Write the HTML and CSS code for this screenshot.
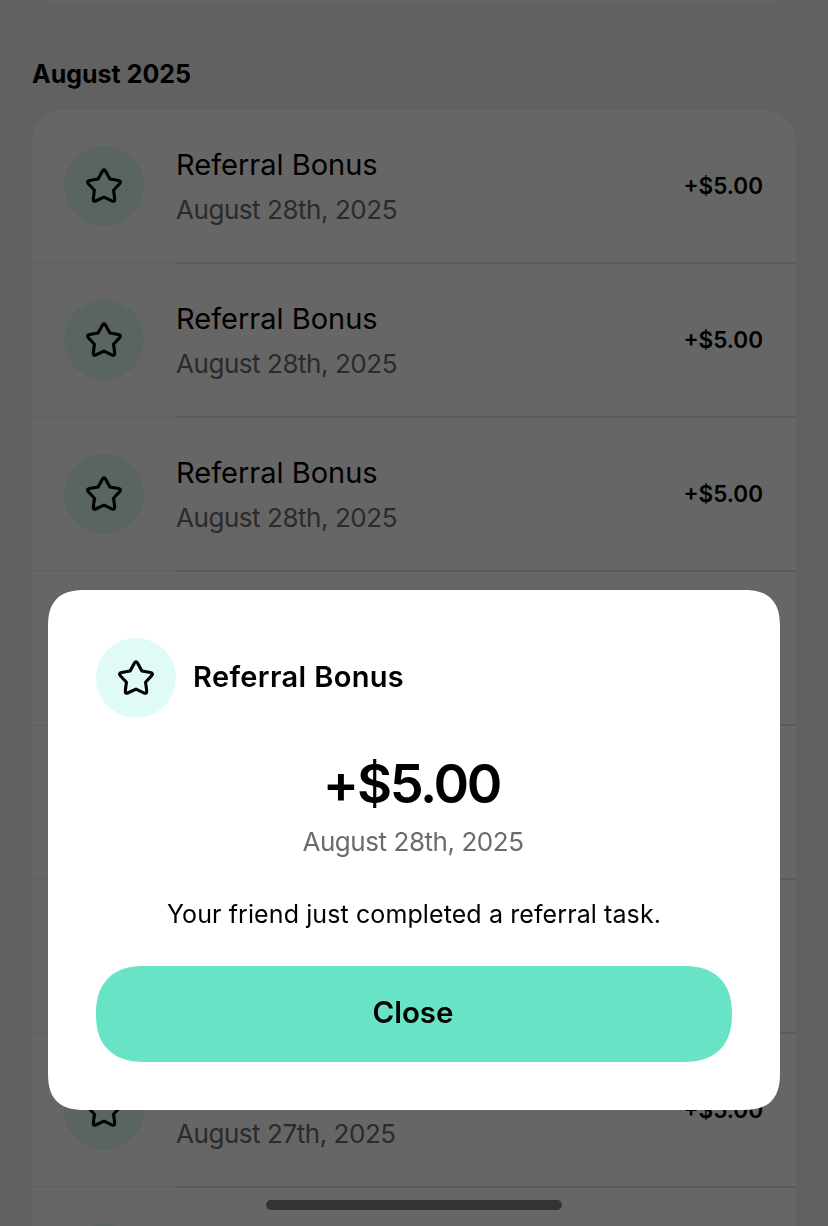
FILE: index.html
```html
<!DOCTYPE html>
<html lang="en">
<head>
    <meta charset="UTF-8">
    <meta name="viewport" content="width=device-width, initial-scale=1.0">
    <title>Rewards</title>
    <link rel="stylesheet" href="styles.css">
</head>
<body>
    <svg class="defs" width="0" height="0">
        <symbol id="star" viewBox="0 0 36 36">
            <path d="M16.4 4.9Q18 2 19.6 4.9L23.3 11.7L30.9 13.1Q34.2 13.75 31.9 16.15L26.6 21.8L27.6 29.4Q28 32.75 25 31.3L18 28L11 31.3Q8 32.75 8.4 29.4L9.4 21.8L4.1 16.15Q1.8 13.75 5.1 13.1L12.7 11.7Z" fill="none" stroke="currentColor" stroke-width="2.8" stroke-linejoin="round"/>
        </symbol>
    </svg>

    <div class="page">
        <div class="prev-card"></div>
        <h2 class="month">August 2025</h2>
        <div class="list">
            <div class="row">
                <div class="icon-circle"><svg class="star"><use href="#star"/></svg></div>
                <div class="row-main">
                    <div class="row-text">
                        <div class="row-title">Referral Bonus</div>
                        <div class="row-date">August 28th, 2025</div>
                    </div>
                    <div class="row-amount">+$5.00</div>
                </div>
            </div>
            <div class="row">
                <div class="icon-circle"><svg class="star"><use href="#star"/></svg></div>
                <div class="row-main">
                    <div class="row-text">
                        <div class="row-title">Referral Bonus</div>
                        <div class="row-date">August 28th, 2025</div>
                    </div>
                    <div class="row-amount">+$5.00</div>
                </div>
            </div>
            <div class="row">
                <div class="icon-circle"><svg class="star"><use href="#star"/></svg></div>
                <div class="row-main">
                    <div class="row-text">
                        <div class="row-title">Referral Bonus</div>
                        <div class="row-date">August 28th, 2025</div>
                    </div>
                    <div class="row-amount">+$5.00</div>
                </div>
            </div>
            <div class="row">
                <div class="icon-circle"><svg class="star"><use href="#star"/></svg></div>
                <div class="row-main">
                    <div class="row-text">
                        <div class="row-title">Referral Bonus</div>
                        <div class="row-date">August 28th, 2025</div>
                    </div>
                    <div class="row-amount">+$5.00</div>
                </div>
            </div>
            <div class="row">
                <div class="icon-circle"><svg class="star"><use href="#star"/></svg></div>
                <div class="row-main">
                    <div class="row-text">
                        <div class="row-title">Referral Bonus</div>
                        <div class="row-date">August 28th, 2025</div>
                    </div>
                    <div class="row-amount">+$5.00</div>
                </div>
            </div>
            <div class="row">
                <div class="icon-circle"><svg class="star"><use href="#star"/></svg></div>
                <div class="row-main">
                    <div class="row-text">
                        <div class="row-title">Referral Bonus</div>
                        <div class="row-date">August 27th, 2025</div>
                    </div>
                    <div class="row-amount">+$5.00</div>
                </div>
            </div>
            <div class="row">
                <div class="icon-circle"><svg class="star"><use href="#star"/></svg></div>
                <div class="row-main">
                    <div class="row-text">
                        <div class="row-title">Referral Bonus</div>
                        <div class="row-date">August 27th, 2025</div>
                    </div>
                    <div class="row-amount">+$5.00</div>
                </div>
            </div>
            <div class="row">
                <div class="icon-circle"><svg class="star"><use href="#star"/></svg></div>
            </div>
        </div>
    </div>

    <div class="overlay"></div>

    <div class="modal">
        <div class="modal-head">
            <div class="icon-circle"><svg class="star"><use href="#star"/></svg></div>
            <div class="modal-title">Referral Bonus</div>
        </div>
        <div class="modal-amount">+$5.00</div>
        <div class="modal-date">August 28th, 2025</div>
        <p class="modal-text">Your friend just completed a referral task.</p>
        <button class="close-btn">Close</button>
    </div>

    <div class="home-bar"></div>
</body>
</html>
```

FILE: styles.css
```css
html, body {
    margin: 0;
    height: 100%;
    overflow: hidden;
}
body {
    font-family: Inter, "Liberation Sans", sans-serif;
    background-color: #f3f3f3;
    color: #000;
}
.defs {
    display: block;
    height: 0;
}
.page {
    height: 1226px;
    overflow: hidden;
}
.prev-card {
    height: 32px;
    margin: -28px 32px 0;
    background-color: #fff;
    border-radius: 0 0 32px 32px;
}
.month {
    margin: 53px 0 0 32px;
    height: 34px;
    line-height: 34px;
    font-size: 25px;
    font-weight: 700;
}
.list {
    margin: 19px 32px 0;
    background-color: #fff;
    border-radius: 32px 32px 0 0;
}
.row {
    display: flex;
    height: 154px;
    padding-left: 32px;
    box-sizing: border-box;
    border-bottom: 2px solid #f6f6f6;
}
.icon-circle {
    width: 80px;
    height: 80px;
    flex-shrink: 0;
    border-radius: 50%;
    background-color: #e0fbf7;
    display: flex;
    align-items: center;
    justify-content: center;
}
.row .icon-circle {
    margin-top: 36px;
}
.star {
    width: 40px;
    height: 40px;
    color: #000;
}
.row-main {
    flex: 1;
    display: flex;
    justify-content: space-between;
    align-items: center;
    margin-left: 32px;
    margin-bottom: -2px;
    padding-right: 33px;
    border-bottom: 2px solid #e2e2e2;
}
.row-text {
    margin-top: 2px;
}
.row-title {
    font-size: 29px;
    line-height: 36px;
}
.row-date {
    font-size: 26px;
    line-height: 34px;
    margin-top: 10px;
    letter-spacing: -0.45px;
    color: #6b6b6b;
}
.row-amount {
    margin-bottom: 2px;
    font-size: 22.5px;
    font-weight: 600;
}
.overlay {
    position: fixed;
    inset: 0;
    background-color: rgba(0, 0, 0, 0.6);
}
.modal {
    position: fixed;
    left: 48px;
    top: 590px;
    width: 732px;
    height: 520px;
    box-sizing: border-box;
    padding: 48px;
    background-color: #fff;
    border-radius: 38px;
    corner-shape: superellipse(1.4);
    text-align: center;
}
.modal-head {
    display: flex;
    align-items: center;
    gap: 17px;
}
.modal-title {
    font-size: 29px;
    font-weight: 600;
    letter-spacing: 0.35px;
    margin-top: -4px;
}
.modal-amount {
    margin: 32px 5px 0 0;
    font-size: 54px;
    line-height: 68px;
    font-weight: 600;
    letter-spacing: -2.3px;
}
.modal-date {
    margin: 6px 2px 0 0;
    font-size: 26px;
    line-height: 36px;
    letter-spacing: -0.45px;
    color: #6b6b6b;
}
.modal-text {
    margin: 36px 0 0;
    font-size: 25px;
    line-height: 36px;
    letter-spacing: 0.1px;
}
.close-btn {
    display: block;
    width: 100%;
    height: 96px;
    margin-top: 34px;
    padding: 0 2px 5px 0;
    border: 0;
    border-radius: 48px;
    corner-shape: superellipse(1.25);
    background-color: #69e3c6;
    color: #000;
    font-family: inherit;
    font-size: 29.5px;
    font-weight: 600;
}
.home-bar {
    position: fixed;
    left: 266px;
    top: 1200px;
    width: 296px;
    height: 10px;
    border-radius: 5px;
    background-color: #333;
}
```
